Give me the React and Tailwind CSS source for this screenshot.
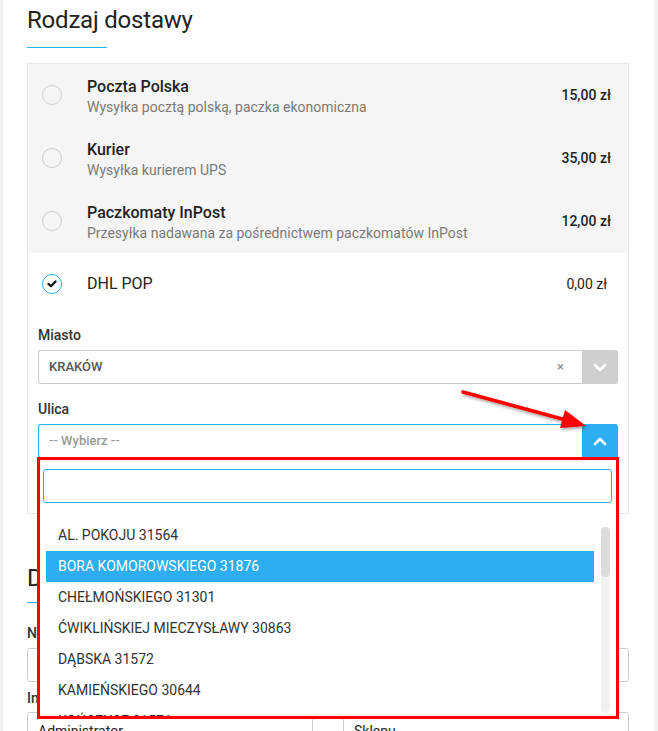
import React from "react";

function ChevronDown() {
  return (
    <svg width="14" height="9" viewBox="0 0 14 9">
      <polyline points="2,2 7,7 12,2" fill="none" stroke="#fff" strokeWidth="2.6" strokeLinecap="round" strokeLinejoin="round" />
    </svg>
  );
}
function ChevronUp() {
  return (
    <svg width="14" height="9" viewBox="0 0 14 9">
      <polyline points="2,7 7,2 12,7" fill="none" stroke="#fff" strokeWidth="2.6" strokeLinecap="round" strokeLinejoin="round" />
    </svg>
  );
}

const rows = [
  { t: "Poczta Polska", d: "Wysyłka pocztą polską, paczka ekonomiczna", p: "15,00 zł" },
  { t: "Kurier", d: "Wysyłka kurierem UPS", p: "35,00 zł" },
  { t: "Paczkomaty InPost", d: "Przesyłka nadawana za pośrednictwem paczkomatów InPost", p: "12,00 zł" },
];

const streets = [
  "AL. POKOJU 31564",
  "BORA KOMOROWSKIEGO 31876",
  "CHEŁMOŃSKIEGO 31301",
  "ĆWIKLIŃSKIEJ MIECZYSŁAWY 30863",
  "DĄBSKA 31572",
  "KAMIEŃSKIEGO 30644",
  "KOŃCZYCE 31571",
];

export default function App() {
  return (
    <div className="relative w-[658px] h-[731px] overflow-hidden bg-[#f1f1f1] font-['Roboto',sans-serif] text-[#222]">
      <div className="ml-[3px] w-[651px] h-full bg-white pl-[24px] pt-[6px]">
        <div className="w-[602px]">
          <h2 className="text-[24px] leading-[28px] tracking-[-0.2px] text-[#222]">Rodzaj dostawy</h2>
          <div className="mt-[13px] h-px w-[80px] bg-[#2eaef0]" />

          <div className="mt-[15px] border border-[#e6e6e6]">
            <div className="bg-[#f5f5f5]">
              {rows.map((r) => (
                <div key={r.t} className="flex items-center h-[63px] pl-[14px] pr-[17px]">
                  <div className="w-[20px] h-[20px] rounded-full border border-[#cfcfcf] shrink-0 -mt-[1px]" />
                  <div className="ml-[25px] pt-[2px]">
                    <div className="text-[16px] leading-[20px] font-medium text-[#222]">{r.t}</div>
                    <div className="text-[14px] leading-[20px] text-[#7a7a7a]">{r.d}</div>
                  </div>
                  <div className="ml-auto text-[14px] font-medium text-[#222]">{r.p}</div>
                </div>
              ))}
            </div>

            <div className="flex items-center h-[62px] pl-[14px] pr-[21px]">
              <div className="w-[20px] h-[20px] rounded-full border-[1.5px] border-[#2eaef0] bg-white flex items-center justify-center shrink-0">
                <svg width="10" height="8" viewBox="0 0 10 8">
                  <polyline points="1.5,4 4,6.3 8.5,1.5" fill="none" stroke="#111" strokeWidth="2.2" strokeLinecap="round" strokeLinejoin="round" />
                </svg>
              </div>
              <div className="ml-[25px] text-[16px] text-[#222]">DHL POP</div>
              <div className="ml-auto text-[14px] text-[#222]">0,00 zł</div>
            </div>

            <div className="px-[10px] pt-[10px] pb-[55px]">
              <div className="text-[14px] leading-[20px] font-medium text-[#333]">Miasto</div>
              <div className="mt-[5px] flex h-[34px]">
                <div className="flex-1 flex items-center border border-r-0 border-[#cccccc] rounded-l-[3px] pl-[10px] pr-[18px]">
                  <span className="text-[13px] font-medium text-[#555]">KRAKÓW</span>
                  <span className="ml-auto text-[13px] text-[#888]">×</span>
                </div>
                <div className="w-[36px] bg-[#cfcfcf] rounded-r-[3px] flex items-center justify-center">
                  <ChevronDown />
                </div>
              </div>

              <div className="mt-[15px] text-[14px] leading-[20px] font-medium text-[#333]">Ulica</div>
              <div className="relative mt-[5px]">
                <div className="flex h-[34px]">
                  <div className="flex-1 flex items-center border border-r-0 border-[#2eaef0] rounded-l-[3px] pl-[10px]">
                    <span className="text-[13px] font-medium text-[#999]">-- Wybierz --</span>
                  </div>
                  <div className="w-[36px] bg-[#2eaef0] rounded-tr-[3px] flex items-center justify-center">
                    <ChevronUp />
                  </div>
                </div>
                <div className="absolute left-0 right-[1px] top-[34px] h-[261px] z-10 bg-white border border-t-0 border-[#2eaef0] overflow-hidden px-[4px] pt-[11px]">
                  <div className="h-[34px] border border-[#2eaef0] rounded-[3px]" />
                  <div className="mt-[17px] flex">
                    <div className="flex-1 pl-[3px]">
                      {streets.map((s, i) => (
                        <div
                          key={s}
                          className={
                            i === 1
                              ? "h-[31px] flex items-center pl-[12px] text-[14px] bg-[#2eaef0] text-white"
                              : "h-[31px] flex items-center pl-[12px] text-[14px] text-[#333]"
                          }
                        >
                          {s}
                        </div>
                      ))}
                    </div>
                    <div className="ml-[7px] mr-[2px] mt-[7px] w-[9px] h-[186px] rounded-full bg-[#f1f1f1]">
                      <div className="h-[50px] rounded-full bg-[#dcdcdc]" />
                    </div>
                  </div>
                </div>
              </div>
            </div>
          </div>

          <h2 className="mt-[50px] text-[24px] leading-[28px] text-[#222]">Dane</h2>
          <div className="mt-[10px] h-px w-[80px] bg-[#2eaef0]" />
          <div className="mt-[20px] text-[14px] leading-[20px] font-medium text-[#333]">Nazwa</div>
          <div className="mt-[5px] h-[34px] border border-[#cccccc] rounded-[3px]" />
          <div className="mt-[6px] text-[14px] leading-[20px] font-medium text-[#333]">Info</div>
          <div className="mt-[4px] grid grid-cols-2 gap-[30px]">
            <div className="h-[40px] border border-[#cccccc] rounded-[3px] pl-[10px] pt-[8px] text-[14px] text-[#222]">Administrator</div>
            <div className="h-[40px] border border-[#cccccc] rounded-[3px] pl-[10px] pt-[8px] text-[14px] text-[#222]">Sklepu</div>
          </div>
        </div>
      </div>

      <div className="absolute left-[37px] top-[457px] w-[582px] h-[262px] border-[3px] border-[#ff0000] z-20 pointer-events-none" />
      <svg className="absolute left-0 top-0 z-20 pointer-events-none" width="658" height="731" viewBox="0 0 658 731">
        <defs>
          <filter id="sh" x="-20%" y="-50%" width="140%" height="200%">
            <feDropShadow dx="1" dy="2" stdDeviation="1.5" floodColor="#000" floodOpacity="0.35" />
          </filter>
        </defs>
        <g filter="url(#sh)">
          <line x1="463" y1="392" x2="566" y2="420" stroke="#ff0000" strokeWidth="3.5" strokeLinecap="round" />
          <polygon points="586,426 565,410 560,428" fill="#ff0000" />
        </g>
      </svg>
    </div>
  );
}
